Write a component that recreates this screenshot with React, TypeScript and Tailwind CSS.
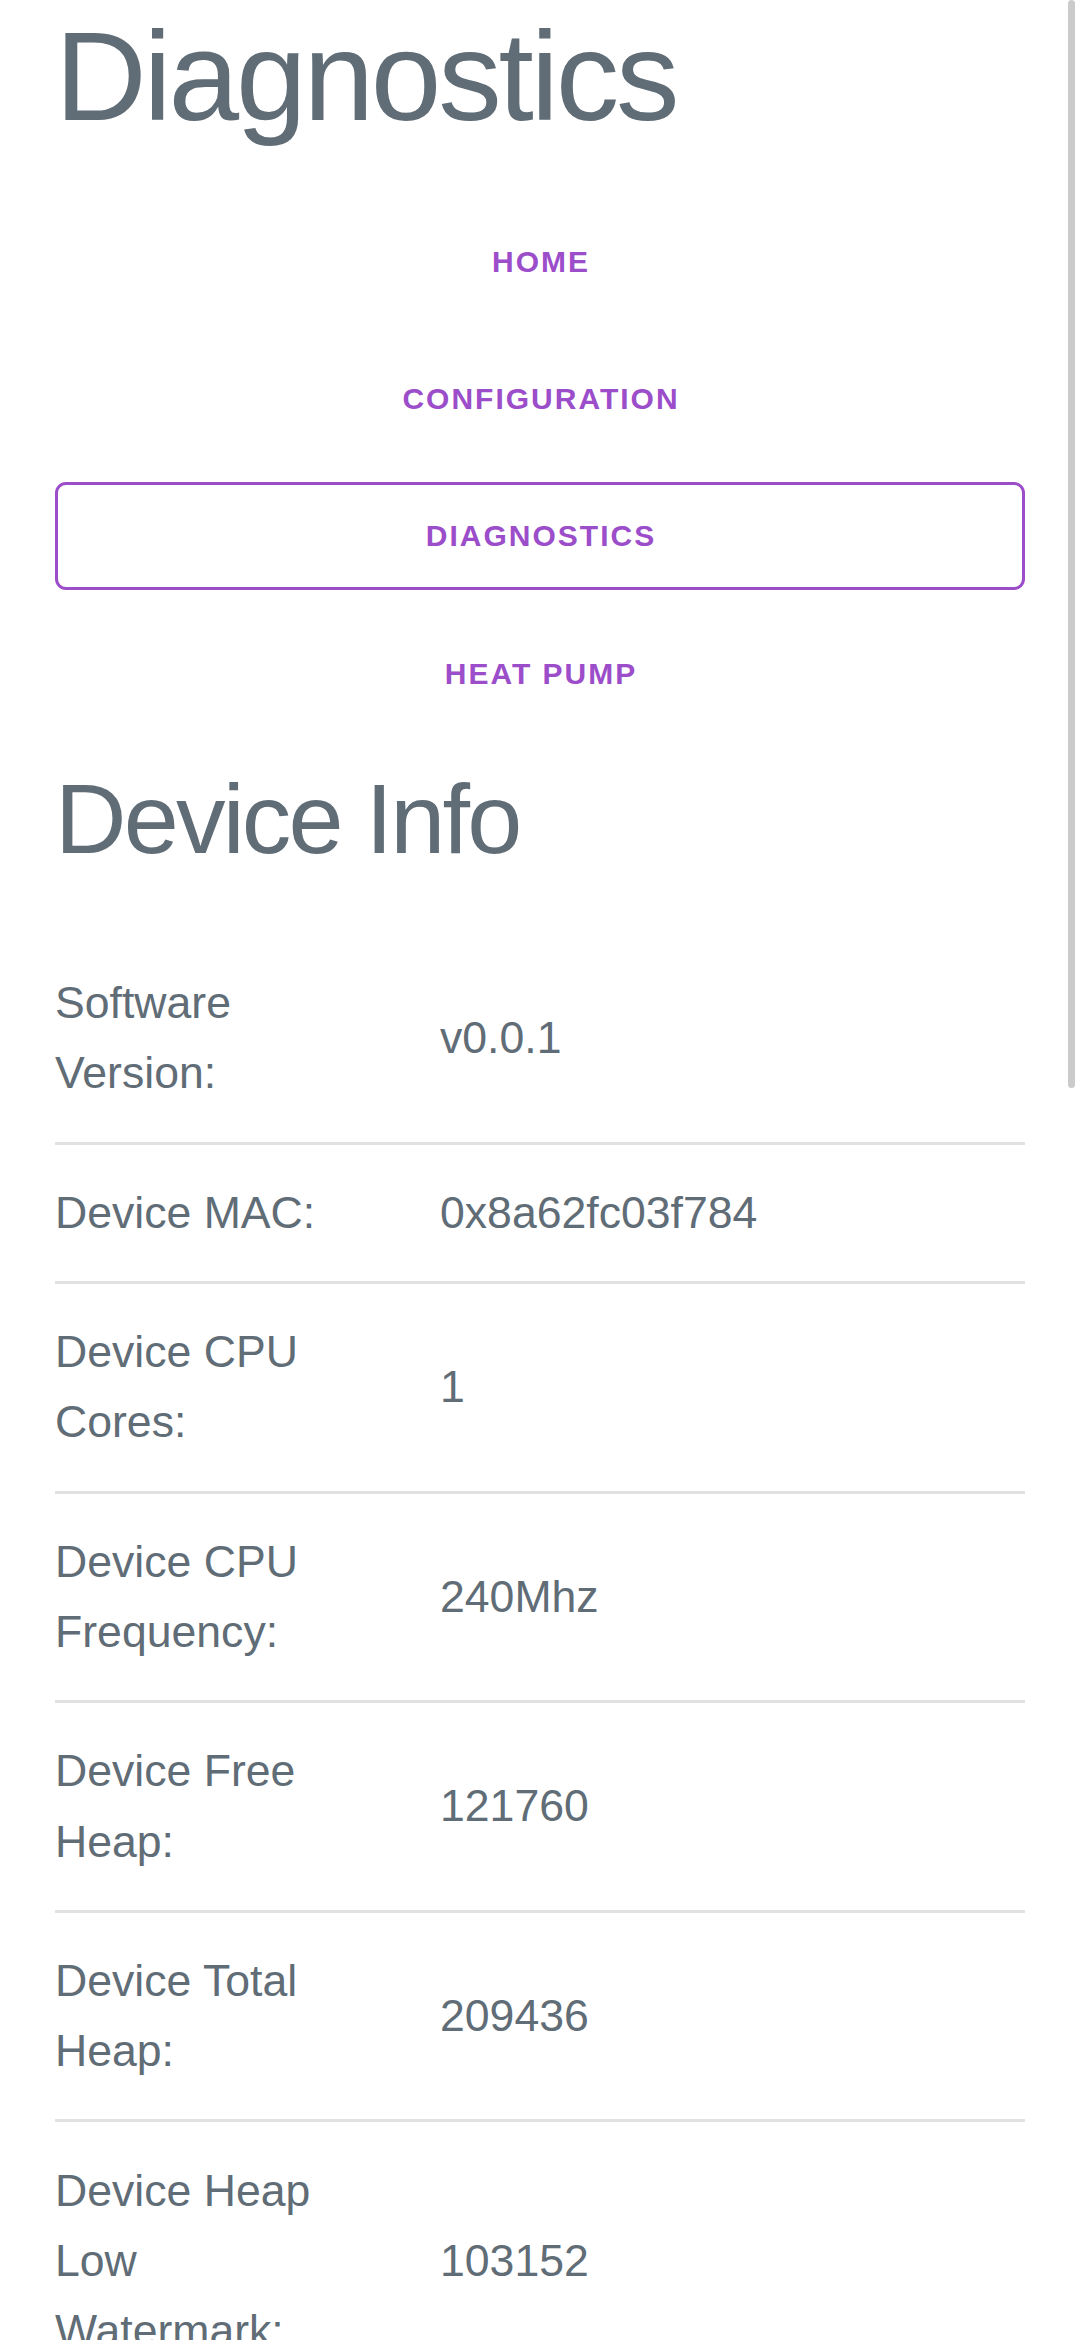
import React from "react";

const navItems = [
  { label: "Home", active: false },
  { label: "Configuration", active: false },
  { label: "Diagnostics", active: true },
  { label: "Heat Pump", active: false },
];

const deviceInfo: [string, string][] = [
  ["Software Version:", "v0.0.1"],
  ["Device MAC:", "0x8a62fc03f784"],
  ["Device CPU Cores:", "1"],
  ["Device CPU Frequency:", "240Mhz"],
  ["Device Free Heap:", "121760"],
  ["Device Total Heap:", "209436"],
  ["Device Heap Low Watermark:", "103152"],
];

export default function App() {
  return (
    <div className="relative h-[2340px] overflow-hidden bg-white font-['Liberation_Sans',Arial,sans-serif] text-[#606c76]">
      <div className="px-[55px]">
        <h1 className="text-[127px] leading-[152px] tracking-[-3.2px] font-normal mb-[56px]">
          Diagnostics
        </h1>

        {/* nav */}
        <nav className="flex flex-col gap-[29.2px]">
          {navItems.map((item) => (
            <a
              key={item.label}
              href="#"
              className={`block h-[108px] rounded-[11px] border-[3px] text-center uppercase font-bold text-[30px] leading-[102px] tracking-[2px] pl-[2px] text-[#9b4dca] ${
                item.active ? "border-[#9b4dca]" : "border-transparent"
              }`}
            >
              {item.label}
            </a>
          ))}
        </nav>

        <h2 className="mt-[29.5px] mb-[54px] text-[99px] leading-[124px] tracking-[-2.8px] font-normal">
          Device Info
        </h2>

        {/* device info table */}
        <div>
          {deviceInfo.map(([label, value]) => (
            <div
              key={label}
              className="grid grid-cols-[300px_1fr] gap-x-[85px] items-center border-b-[3px] border-[#e1e1e1] py-[33.1px] text-[44.6px] leading-[70.2px]"
            >
              <div>{label}</div>
              <div>{value}</div>
            </div>
          ))}
        </div>
      </div>

      {/* overlay scrollbar thumb */}
      <div className="absolute top-0 right-[5px] w-[7px] h-[1088px] rounded-full bg-[#cbcbcb]" />
    </div>
  );
}
